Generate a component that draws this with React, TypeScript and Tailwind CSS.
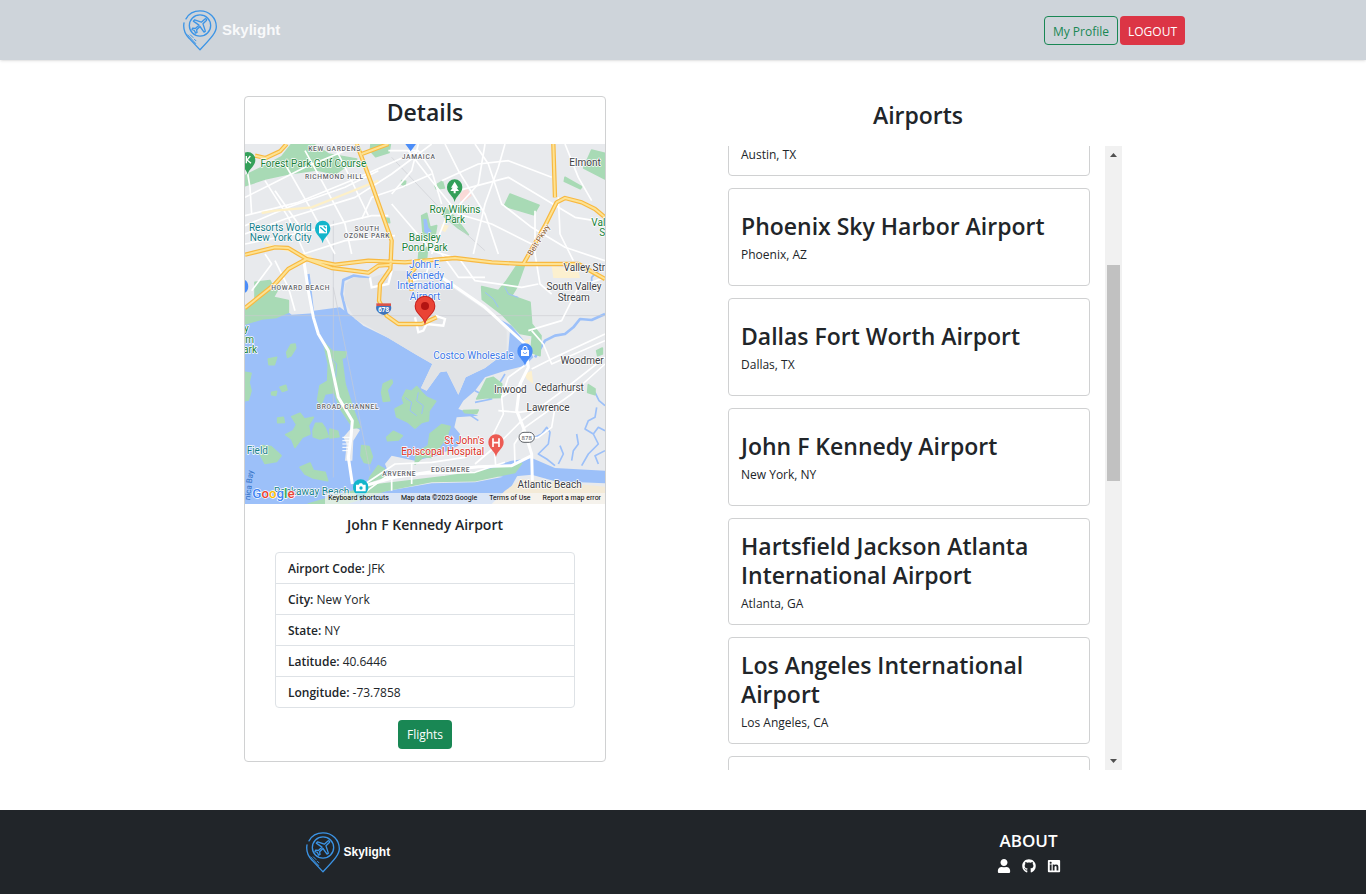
import { useLayoutEffect, useRef } from "react"
import { FaGithub, FaLinkedin, FaUser } from "react-icons/fa"

const airports = [
    { name: "Austin Bergstrom International Airport", location: "Austin, TX" },
    { name: "Phoenix Sky Harbor Airport", location: "Phoenix, AZ" },
    { name: "Dallas Fort Worth Airport", location: "Dallas, TX" },
    { name: "John F Kennedy Airport", location: "New York, NY" },
    { name: "Hartsfield Jackson Atlanta International Airport", location: "Atlanta, GA" },
    { name: "Los Angeles International Airport", location: "Los Angeles, CA" },
    { name: "Miami Airport", location: "Miami, FL" },
]

const details = [
    { label: "Airport Code:", value: "JFK" },
    { label: "City:", value: "New York" },
    { label: "State:", value: "NY" },
    { label: "Latitude:", value: "40.6446" },
    { label: "Longitude:", value: "-73.7858" },
]

// how far the list has been scrolled when the page opens
const LIST_SCROLL = 77

const water = "#9cc0f9"
const park = "#a8dab5"
const land = "#e8eaed"
const place = "#3c4043"
const area = "#5f6368"
const green = "#188038"
const teal = "#12808c"
const blue = "#3b78e7"
const red = "#d93025"

const mapLabels = [
    { text: "KEW GARDENS", x: 269, y: 20, size: 20, color: area, spaced: true },
    { text: "JAMAICA", x: 521, y: 44, size: 20, color: area, spaced: true },
    { text: "RICHMOND HILL", x: 268, y: 105, size: 20, color: area, spaced: true },
    { text: "SOUTH", x: 366, y: 262, size: 20, color: area, spaced: true },
    { text: "OZONE PARK", x: 366, y: 283, size: 20, color: area, spaced: true },
    { text: "HOWARD BEACH", x: 167, y: 438, size: 20, color: area, spaced: true },
    { text: "BROAD CHANNEL", x: 309, y: 796, size: 20, color: area, spaced: true },
    { text: "EDGEMERE", x: 617, y: 983, size: 20, color: area, spaced: true },
    { text: "ARVERNE", x: 463, y: 997, size: 20, color: area, spaced: true },
    { text: "Forest Park Golf Course", x: 205, y: 69, size: 30, color: green },
    { text: "Roy Wilkins", x: 630, y: 206, size: 30, color: green },
    { text: "Park", x: 630, y: 238, size: 30, color: green },
    { text: "Baisley", x: 539, y: 290, size: 30, color: green },
    { text: "Pond Park", x: 539, y: 321, size: 30, color: green },
    { text: "Val", x: 1060, y: 245, size: 30, color: green },
    { text: "S", x: 1072, y: 276, size: 30, color: green },
    { text: "y", x: 4, y: 565, size: 30, color: green },
    { text: "m", x: 14, y: 596, size: 30, color: green },
    { text: "ark", x: 15, y: 627, size: 30, color: green },
    { text: "Resorts World", x: 106, y: 260, size: 30, color: teal },
    { text: "New York City", x: 107, y: 292, size: 30, color: teal },
    { text: "Field", x: 37, y: 930, size: 30, color: teal },
    { text: "Rockaway Beach", x: 200, y: 1052, size: 30, color: teal },
    { text: "John F.", x: 540, y: 372, size: 30, color: blue },
    { text: "Kennedy", x: 540, y: 404, size: 30, color: blue },
    { text: "International", x: 540, y: 436, size: 30, color: blue },
    { text: "Airport", x: 540, y: 467, size: 30, color: blue },
    { text: "Costco Wholesale", x: 685, y: 645, size: 30, color: blue },
    { text: "St John's", x: 658, y: 901, size: 30, color: red },
    { text: "Episcopal Hospital", x: 593, y: 932, size: 30, color: red },
    { text: "Elmont", x: 1020, y: 65, size: 30, color: place },
    { text: "Valley Str", x: 1018, y: 382, size: 30, color: place },
    { text: "South Valley", x: 987, y: 438, size: 30, color: place },
    { text: "Stream", x: 986, y: 470, size: 30, color: place },
    { text: "Woodmer", x: 1011, y: 661, size: 30, color: place },
    { text: "Inwood", x: 796, y: 746, size: 30, color: place },
    { text: "Cedarhurst", x: 943, y: 740, size: 30, color: place },
    { text: "Lawrence", x: 909, y: 801, size: 30, color: place },
    { text: "Atlantic Beach", x: 914, y: 1032, size: 30, color: place },
]

const greenAreas = [
    "M140 0L205 0L250 30L335 45L270 90L215 78L130 90L60 105L0 125L0 95L60 65L110 38Z",
    "M378 0L436 0L432 25L392 38L376 20Z",
    "M795 150L882 184L866 212L778 186Z",
    "M1040 18L1080 28L1080 105L1016 72Z",
    "M960 100L1010 128L1006 134L958 112Z",
    "M600 190L630 220L670 272L640 252L598 218Z",
    "M530 215L545 208L555 250L575 245L570 275L535 280Z",
    "M420 222L432 224L434 236L420 234Z",
    "M522 325L548 310L545 340L520 350Z",
    "M570 125L592 112L598 132L574 135Z",
    "M470 110L482 112L480 126L470 120Z",
    "M30 415L75 410L85 430L105 425L85 460L130 470L130 505L95 520L50 525L0 540L0 490L30 470Z",
    "M815 365L838 365L815 430L800 455L855 475L860 540L888 575L885 635L858 625L862 575L825 568L772 512L712 466L710 428L760 440L785 410Z",
    "M236 595L262 622L304 624L300 640L290 642L300 720L326 800L345 850L325 852L285 792L268 745L240 750L228 782L218 768L225 725L248 712L250 660Z",
    "M0 685L18 688L12 715L18 740L10 768L0 770Z",
    "M70 645L95 640L88 662L72 662Z",
    "M125 625L138 602L150 600L152 612L138 635L128 640Z",
    "M80 745L95 742L92 754L80 752ZM105 730L122 724L126 738L112 742ZM98 822L115 820L118 835L98 836Z",
    "M140 818L165 808L178 825L205 820L190 845L195 870L172 880L150 910L140 885L122 872L145 860L155 842Z",
    "M212 838L230 838L240 852L250 878L225 885L205 878L204 860Z",
    "M255 855L278 862L282 878L255 882Z",
    "M50 905L78 908L108 935L95 952L60 958L45 930Z",
    "M165 970L195 957L205 980L240 985L248 1010L205 1002L180 990Z",
    "M350 905L372 908L382 938L375 958L358 955L348 935Z",
    "M415 720L440 708L442 716L426 738L434 770L415 772L410 745Z",
    "M484 738L500 742L515 728L530 745L545 760L572 772L552 800L550 830L530 835L510 852L490 835L455 818L450 795L478 780L472 762Z",
    "M555 870L590 842L615 848L605 880L585 905L560 940L535 938L510 960L515 925L550 905Z",
    "M425 880L445 862L472 875L460 888L428 890Z",
    "M375 1000L400 965L418 975L415 1000L370 1015Z",
    "M695 765L725 705L745 700L770 720L770 760L720 762Z",
    "M655 800L700 798L695 808L660 806Z",
    "M1030 722L1050 735L1050 752L1028 745Z",
    "M190 1080L300 1048L400 1022L600 998L690 985L830 958L810 985L690 1010L560 1012L420 1040L300 1080Z",
    "M1055 620L1072 612L1072 630L1058 635Z",
]

const minorRoads = [
    "M0 160L180 70L300 20",
    "M0 215L160 175L330 105L520 20",
    "M0 245L130 190L300 130L400 80",
    "M0 270L120 225L330 160L440 90L560 0",
    "M0 300L150 270L380 215L430 215",
    "M175 330L300 290L450 275",
    "M60 110L130 220L180 330",
    "M120 60L200 200L270 330",
    "M90 140L160 240",
    "M0 40L15 130L20 210",
    "M180 20L230 110L300 240L320 330",
    "M265 0L310 90L370 215",
    "M350 225L380 160L470 130L560 90",
    "M440 180L560 320L640 345",
    "M430 20L520 20L560 80L590 180",
    "M490 20L560 110L640 210L740 240L840 290L860 300",
    "M600 0L640 80L720 210L760 330",
    "M690 0L730 60L770 180L860 250L960 310L1080 350",
    "M720 0L700 120L600 230L560 330",
    "M590 110L700 60L790 50L920 100",
    "M780 0L760 70L720 180L685 330",
    "M640 140L790 100L990 220L1080 235",
    "M960 0L1000 100L1040 170",
    "M940 160L945 270L985 350",
    "M870 200L870 330L885 420L920 450",
    "M440 150L500 80L520 0",
    "M640 340L690 410L830 430L880 420",
    "M590 330L640 400L720 400",
    "M560 340L540 400L500 410",
    "M20 440L80 360L60 330",
    "M90 350L130 430L150 500",
    "M850 560L950 530L1000 430L1080 400",
    "M860 560L895 600L920 660L1080 590",
    "M860 675L930 640L1080 570",
    "M770 760L790 700L845 660",
    "M752 965L745 870L775 810L770 760L830 720",
    "M760 800L820 805L930 790L920 850L880 880L830 890",
    "M690 960L760 900L830 830L940 750L1080 640",
    "M810 960L808 900L840 850L980 750L1080 660",
    "M360 1020L450 960L560 955L660 940",
    "M340 1060L420 1000L540 990L690 985L780 955",
    "M440 1040L440 980M500 1020L500 960",
]

const highways = "M335 0L380 120L440 290L436 375L405 420L402 470L425 515L460 540L530 540L575 520M0 332L90 310L130 312L185 345L270 362L370 350L480 355L630 342L740 355L835 360L900 245L935 175L960 162L1010 175L1050 195L1080 220M0 492L90 420L130 375L185 345L260 372L370 386L400 365L440 362M925 0L930 160M835 360L1000 360L1080 405M125 0L105 22L62 42L30 35M500 440L495 390L520 360M350 30L430 0"

const LogoPin = () => {
    return (
        <svg viewBox="0 0 102 122" className="h-[41px] w-[34px]" fill="none" stroke="#3b94e6" strokeWidth="4" strokeLinecap="round" strokeLinejoin="round" aria-hidden="true">
            <path d="M9 26C18 9 34 2 51 2C79 2 100 23 100 50C100 66 88 80 51 119L18 84C5 71 0 56 3 38" />
            <circle cx="51" cy="46" r="32" />
            <path strokeWidth="4" d="M65 27C68 24 73 27 70 31L60 41L67 63L63 66L51 49L41 59L42 67L38 69L34 61L27 58L29 54L37 55L48 45L31 33L35 29L55 36Z" />
            <path strokeWidth="3" d="M14 74L38 100M22 74L30 82M34 87L39 92" />
        </svg>
    )
}

const MapPin = ({ x, y, color }: { x: number; y: number; color: string }) => {
    return <path transform={`translate(${x} ${y})`} fill={color} d="M0 42C-4 22-23 18-23-3A23 23 0 0 1 23-3C23 18 4 22 0 42Z" />
}

const AirportMap = () => {
    return (
        <div className="relative aspect-square w-full overflow-hidden">
            <svg viewBox="0 0 1080 1080" className="block h-full w-full" role="img" aria-label="Map around John F Kennedy Airport">
                <rect width="1080" height="1080" fill={land} />

                {/* bay and ocean */}
                <path fill={water} d="M0 540L50 525L95 520L130 505L140 512L205 508L205 500L285 490L325 520L355 545L430 582L510 630L562 660L528 732L545 740L585 685L605 682L640 752L662 700L720 672L790 620L795 560L745 515L800 545L845 600L865 640L840 665L780 680L720 700L690 740L655 770L640 795L700 815L635 820L628 850L645 870L640 905L575 935L510 950L440 935L420 960L430 985L385 1005L345 1040L310 1080L0 1080Z" />
                <path fill={water} d="M230 1080L420 1042L560 1018L690 1015L820 990L770 1080Z" />
                <path fill={water} d="M690 985L800 950L860 942L930 972L1080 980L1080 1018L930 1012L860 992L780 1000Z" />
                <path fill="#f3ead7" d="M780 1040L830 1005L1080 1028L1080 1080L740 1080Z" />
                <path fill="none" stroke={water} strokeWidth="8" strokeLinejoin="round" d="M375 403L325 395L295 408L290 450L305 512M190 390L195 430L205 520M870 640L888 610L900 590L930 575L960 570L985 550L1005 525L1040 528L1080 510" />
                <path fill="none" stroke={water} strokeWidth="5" strokeLinejoin="round" d="M870 880L890 870L905 850L915 865L910 900L880 930L905 945L930 965M1050 745L1062 770L1080 785M1010 965L1030 930L1060 900L1045 870L1020 855L1030 830L1050 820L1055 790M980 950L985 920L1000 900L995 870M1060 960L1050 935L1080 920M1080 860L1060 850L1045 870M940 960L955 930L945 905M1075 360L1060 380L1040 400L1040 440M690 740L740 765L690 775M655 800L700 830M780 690L750 740" />
                <path fill="#e1e3e6" d="M375 403L325 400L300 420L298 470L330 525L430 582L510 630L562 660L528 732L545 740L585 685L605 682L640 752L662 700L720 672L785 620L785 560L745 515L620 430L560 380L440 380Z" />
                <path fill={land} d="M325 845L345 858L325 890L322 950L300 950L305 900L295 880Z" />

                {greenAreas.map((d, index) => (
                    <path key={index} d={d} fill={park} stroke={park} strokeWidth="5" strokeLinejoin="round" />
                ))}
                <path fill="none" stroke={water} strokeWidth="3" d="M480 760L500 775L495 800L515 815M520 745L515 770L535 785L530 810M255 640L275 660L272 700M780 430L790 450L820 460M720 445L745 465L760 490" />
                <path fill={water} d="M535 225L545 225L550 250L560 262L550 272L538 265Z" />
                <path fill="#fcf0cf" d="M920 365L1000 380L1005 402L925 402ZM590 240L612 245L600 265L588 258ZM835 590L855 585L850 605ZM838 690L860 680L865 720L845 705Z" />
                <path fill="#fadad7" d="M645 150L665 130L680 155L655 175L645 170Z" />
                <path fill="none" stroke="#c9ccd1" strokeWidth="3" d="M440 40L620 230L720 320M265 430L375 980M0 515L1080 515M265 230L265 1000" opacity="0.6" />

                {minorRoads.map((d, index) => (
                    <path key={index} d={d} fill="none" stroke="#ffffff" strokeWidth="5" strokeLinejoin="round" />
                ))}
                <path fill="none" stroke="#fdf0c8" strokeWidth="7" d="M50 207L90 200L200 190L300 150L400 110M60 300L200 340" />
                <path fill="none" stroke="#ffffff" strokeWidth="9" strokeLinejoin="round" d="M175 340L190 440L205 520L220 570L250 620L265 690L280 760L322 830L318 880L310 940L322 1020M590 400L720 490L840 600L850 670L825 720L815 800L835 850L860 930L862 1010M340 1030L450 1000L550 985L700 968L800 965L860 935" />
                <path fill="none" stroke="#ffffff" strokeWidth="3" d="M292 880L320 880M292 890L320 890M292 900L318 900M292 910L316 910M292 920L314 920" />
                <path fill="none" stroke="#ffffff" strokeWidth="7" d="M375 400L380 430L430 420L440 380M510 520L520 565L535 560L545 540L595 545L600 525L570 515" />

                {/* highways */}
                <g fill="none" strokeLinejoin="round">
                    <path stroke="#f8b940" strokeWidth="13" d={highways} />
                    <path stroke="#fde293" strokeWidth="6" d={highways} />
                </g>

                <MapPin x={8} y={50} color="#34a05a" />
                <path fill="none" stroke="#fff" strokeWidth="4" d="M4 36V58M16 36L6 48L18 58" />
                <MapPin x={629} y={132} color="#34a05a" />
                <path fill="#fff" d="M629 113L640 131H635L642 141H632V148H626V141H616L623 131H618Z" />
                <MapPin x={233} y={256} color="#12b5cb" />
                <path fill="#fff" d="M222 244H246V268H222Z" />
                <path fill="none" stroke="#12b5cb" strokeWidth="4" d="M226 250L242 264M236 247L243 253" />
                <MapPin x={840} y={624} color="#4b8df8" />
                <path fill="#fff" d="M828 618H852V636H828Z" />
                <path fill="none" stroke="#fff" strokeWidth="3" d="M834 618V613A6 6 0 0 1 846 613V618" />
                <path fill="none" stroke="#4b8df8" strokeWidth="2" d="M835 624A5 5 0 0 0 845 624" />
                <MapPin x={753} y={897} color="#ec5b53" />
                <path fill="none" stroke="#fff" strokeWidth="5" d="M744 883V909M762 883V909M744 896H762" />
                <MapPin x={347} y={1032} color="#12b5cb" />
                <path fill="#fff" d="M333 1022H341L344 1018H351L354 1022H362V1042H333Z" />
                <circle cx="348" cy="1032" r="5" fill="#12b5cb" />
                <path fill="#4b8df8" d="M481 0H513L497 22ZM0 408C12 412 14 440 0 446Z" />

                <path fill="#3f74bd" d="M394 486H438C442 500 430 510 416 513C402 510 390 500 394 486Z" />
                <path fill="#d9534a" d="M394 478L438 478L438 486H394Z" />
                <text x="416" y="504" textAnchor="middle" fontSize="19" fontWeight="700" fill="#fff">678</text>
                <rect x="822" y="865" width="46" height="30" rx="15" fill="#fff" stroke="#5f6368" strokeWidth="3" />
                <text x="845" y="887" textAnchor="middle" fontSize="18" fontWeight="500" fill={place}>878</text>

                <g className="font-[Roboto,sans-serif]" stroke="#ffffff" strokeWidth="4" strokeLinejoin="round" paintOrder="stroke" textAnchor="middle">
                    {mapLabels.map((label) => (
                        <text key={label.text + label.y} x={label.x} y={label.y} fontSize={label.size} fill={label.color} className={label.spaced ? "font-medium tracking-[2px]" : ""}>
                            {label.text}
                        </text>
                    ))}
                    <text transform="translate(888 292) rotate(-58)" fontSize="24" fill="#8a5a2b">Belt Pkwy</text>
                    <text transform="translate(20 1024) rotate(-84)" fontSize="24" fill="#2f6fc4" stroke="none">nica Bay</text>
                </g>

                <path fill="#c5221f" d="M540 543C535 515 509 512 509 486A31 31 0 0 1 571 486C571 512 545 515 540 543Z" />
                <path fill="#ea4335" d="M540 538C535 512 512 510 512 486A28 28 0 0 1 568 486C568 510 545 512 540 538Z" />
                <circle cx="540" cy="486" r="12" fill="#b31412" />

                <text x="22" y="1061" fontSize="40" className="font-[Roboto,sans-serif] font-medium" stroke="#fff" strokeWidth="4" paintOrder="stroke">
                    <tspan fill="#4285f4">G</tspan>
                    <tspan fill="#ea4335">o</tspan>
                    <tspan fill="#fbbc04">o</tspan>
                    <tspan fill="#4285f4">g</tspan>
                    <tspan fill="#34a853">l</tspan>
                    <tspan fill="#ea4335">e</tspan>
                </text>
            </svg>
            <div className="absolute right-0 bottom-0 flex h-[11px] items-center gap-3 bg-[#f5f5f5]/70 pr-1 pl-[3px] font-[Roboto,sans-serif] text-[7px] whitespace-nowrap text-black">
                <button type="button">Keyboard shortcuts</button>
                <span>Map data ©2023 Google</span>
                <a href="#terms">Terms of Use</a>
                <a href="#report">Report a map error</a>
            </div>
        </div>
    )
}

const Header = () => {
    return (
        <header className="bg-[#ced4da] shadow-sm">
            <div className="mx-auto flex h-[60px] max-w-[1004px] items-center justify-between pt-px pl-0.5">
                <a href="#home" className="flex items-center gap-[5px]">
                    <LogoPin />
                    <span className="font-['Liberation_Sans',sans-serif] text-[15px] font-bold text-[#f8f9fa]">Skylight</span>
                </a>
                <nav className="flex gap-0.5">
                    <button type="button" className="h-[29px] rounded-[4px] border border-[#198754] px-2 pt-0.5 text-xs text-[#198754]">My Profile</button>
                    <button type="button" className="h-[29px] rounded-[4px] bg-[#dc3545] px-2 pt-0.5 text-xs text-white">LOGOUT</button>
                </nav>
            </div>
        </header>
    )
}

const DetailsCard = () => {
    return (
        <section className="flex w-[362px] flex-col items-center rounded-[4px] border border-[#d0d1d2] pb-3">
            <h2 className="mt-px mb-[17px] text-[23px] leading-[29px] font-semibold">Details</h2>
            <AirportMap />
            <h3 className="mt-[11px] text-sm leading-5 font-semibold">John F Kennedy Airport</h3>
            <ul className="mt-[17px] w-[300px] divide-y divide-[#dee2e6] rounded-[4px] border border-[#dee2e6]">
                {details.map((item) => (
                    <li key={item.label} className="flex h-[31px] items-center gap-[3px] px-3 pt-0.5 text-xs last:h-[30px]">
                        <b className="font-semibold">{item.label}</b>
                        <span>{item.value}</span>
                    </li>
                ))}
            </ul>
            <button type="button" className="mt-3 h-[29px] rounded-[4px] bg-[#198754] px-[9px] text-xs text-white">Flights</button>
        </section>
    )
}

const AirportList = () => {
    const listRef = useRef<HTMLDivElement>(null)

    useLayoutEffect(() => {
        if (listRef.current) listRef.current.scrollTop = LIST_SCROLL
    }, [])

    return (
        <section className="w-[408px] pt-[5px]">
            <h2 className="mb-4 text-center text-[23px] leading-[29px] font-semibold">Airports</h2>
            <div className="flex h-[624px] justify-between pl-3.5">
                <div ref={listRef} className="flex w-[362px] flex-col gap-3 overflow-y-scroll [scrollbar-width:none]">
                    {airports.map((airport) => (
                        <article key={airport.name} className="flex min-h-[98px] shrink-0 flex-col justify-center rounded-[4px] border border-[#d0d1d2] px-3 pt-[13px] pb-[11px]">
                            <h3 className="text-[23px] leading-[29px] font-semibold">{airport.name}</h3>
                            <p className="mt-[5px] text-xs leading-[18px]">{airport.location}</p>
                        </article>
                    ))}
                </div>
                <div className="flex w-[17px] flex-col items-center bg-[#f1f1f1]" aria-hidden="true">
                    <svg viewBox="0 0 17 17" className="size-[17px]" fill="#505050">
                        <path d="M5 11H12L8.5 7Z" />
                    </svg>
                    <div className="mt-[102px] mb-auto h-[216px] w-[13px] bg-[#c1c1c1]" />
                    <svg viewBox="0 0 17 17" className="size-[17px]" fill="#505050">
                        <path d="M5 6H12L8.5 10Z" />
                    </svg>
                </div>
            </div>
        </section>
    )
}

const Footer = () => {
    return (
        <footer className="grow bg-[#212529] text-white">
            <div className="mx-auto flex h-[84px] max-w-[755px] items-center justify-between">
                <a href="#home" className="flex items-center gap-1">
                    <LogoPin />
                    <span className="font-['Liberation_Sans',sans-serif] text-xs font-bold">Skylight</span>
                </a>
                <div className="flex flex-col items-center gap-1.5 pb-0.5">
                    <h4 className="text-[17px] leading-6 font-semibold">ABOUT</h4>
                    <div className="flex gap-[11px]">
                        <a href="#about" aria-label="About me"><FaUser className="size-[14px]" /></a>
                        <a href="#github" aria-label="GitHub"><FaGithub className="size-[14px]" /></a>
                        <a href="#linkedin" aria-label="LinkedIn"><FaLinkedin className="size-[14px]" /></a>
                    </div>
                </div>
            </div>
        </footer>
    )
}

const App = () => {
    return (
        <div className="flex min-h-screen flex-col bg-white font-['Open_Sans',sans-serif] text-[#212529]">
            <Header />
            <main className="mx-auto flex w-full max-w-[878px] items-start justify-between pt-9 pb-10">
                <DetailsCard />
                <AirportList />
            </main>
            <Footer />
        </div>
    )
}

export default App
